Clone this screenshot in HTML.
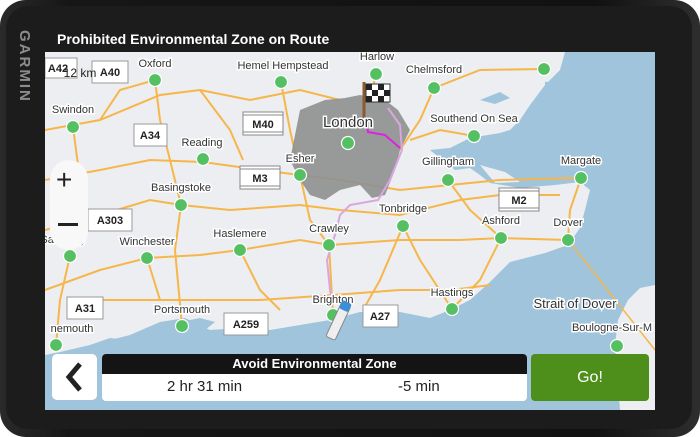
<!DOCTYPE html>
<html><head><meta charset="utf-8"><style>
*{margin:0;padding:0;box-sizing:border-box}
body{width:700px;height:437px;background:#fff;overflow:hidden;font-family:"Liberation Sans",sans-serif;position:relative}
.dev{position:absolute;left:0;top:0;width:700px;height:437px;border-radius:26px;background:linear-gradient(90deg,#2a2a2a,#161616 10%,#111 85%,#2e2e2e);}
.inner{position:absolute;left:6px;top:6px;right:8px;bottom:8px;border-radius:22px;background:#1c1c1c}
.title{position:absolute;left:57px;top:31px;color:#fff;font-weight:bold;font-size:14px}
.garmin{position:absolute;left:13px;top:30px;width:20px;color:#8c8c8c;font-weight:bold;font-size:15px;writing-mode:vertical-rl;letter-spacing:2px}
.map{position:absolute;left:45px;top:52px;width:610px;height:358px;overflow:hidden;background:#eceef1}
svg text{font-family:"Liberation Sans",sans-serif}
.btn{position:absolute;background:#fff;border-radius:5px}
</style></head><body>
<div class="dev"><div class="inner"></div></div>
<div class="garmin">GARMIN</div>
<div class="title">Prohibited Environmental Zone on Route</div>
<div class="map">
<svg width="610" height="358" viewBox="45 52 610 358" xmlns="http://www.w3.org/2000/svg">
<path fill="#9fc4dc" d="M525,52 L655,52 L655,285 L640,288 L628,300 L618,320 L615,345 L620,410 L45,410 L45,355 L60,352 L90,345 L130,335 L160,322 L185,318 L210,330 L240,328 L270,330 L300,325 L330,320 L360,312 L400,312 L430,318 L450,310 L470,300 L490,282 L510,262 L545,253 L568,245 L580,228 L585,210 L590,190 L580,182 L555,185 L520,188 L490,183 L480,175 L470,168 L455,170 L440,158 L430,150 L450,148 L470,138 L500,133 L510,130 L520,120 L530,105 L545,85 L545,72 Z"/>
<path fill="#eceef1" d="M520,52 L565,52 L560,70 L548,82 L530,80Z M480,165 L505,172 L520,182 L495,183Z"/>
<path fill="#9fc4dc" d="M180,322 L200,318 L215,322 L205,330Z M90,345 L110,338 L140,342 L120,352Z M480,100 L500,92 L510,98 L495,104Z"/>
<g fill="none" stroke="#f6b64a" stroke-width="2">
<path d="M45,130 L100,120 L160,95 L200,90 L250,100 L300,90 L340,100"/>
<path d="M45,180 L100,170 L150,160 L203,162 L260,170 L300,175 L340,180 L400,190 L450,185 L500,180 L580,178"/>
<path d="M45,230 L100,215 L150,200 L181,205 L230,210 L300,205 L340,210 L400,215 L460,200 L500,195 L560,195"/>
<path d="M45,290 L100,270 L147,258 L200,255 L240,250 L300,240 L330,245 L400,240 L460,240 L501,238 L568,240"/>
<path d="M155,80 L160,120 L170,160 L181,205 L175,250 L182,326"/>
<path d="M281,82 L290,130 L300,175 L310,220 L329,245 L333,315"/>
<path d="M73,127 L80,180 L70,256 L60,300 L56,345"/>
<path d="M403,226 L420,260 L452,309 M403,226 L380,280 L363,310 M501,238 L480,280 L452,309"/>
<path d="M434,88 L420,120 L400,150 M474,136 L440,130 L410,140 M376,74 L370,100"/>
<path d="M100,300 L182,300 L260,300 L333,295 L400,290 L452,290 L490,285"/>
<path d="M568,240 L655,350" stroke-width="1.5"/>
<path d="M240,250 L260,290 L280,310 M147,258 L160,300 M581,178 L570,210 L568,240 M448,180 L470,210 L501,238"/>
<path d="M200,90 L230,130 L243,160 M100,120 L120,90 L155,80 M434,88 L480,70 L544,69"/>
</g>
<path fill="#8f9090" opacity=".9" d="M300,110 L325,100 L345,98 L360,95 L385,100 L398,110 L410,130 L400,150 L395,170 L385,195 L372,198 L360,185 L340,190 L325,200 L310,195 L300,180 L290,160 L295,135Z"/>
<path fill="none" stroke="#d9a6de" stroke-width="2" d="M388,108 L400,125 L402,150 L390,180 L378,200 L350,205 L340,215 L335,235 L327,260 L330,290 L333,305"/>
<path fill="none" stroke="#e020e0" stroke-width="2" d="M366,118 L368,132 L385,135 L400,148"/>
<line x1="364" y1="82" x2="364" y2="118" stroke="#8a5a30" stroke-width="3"/>
<rect x="366" y="84" width="24" height="18" fill="#fff" stroke="#333"/>
<path fill="#222" d="M366,84h6v6h-6zM378,84h6v6h-6zM372,90h6v6h-6zM384,90h6v6h-6zM366,96h6v6h-6zM378,96h6v6h-6z"/>
<g fill="#55c062" stroke="#fff" stroke-width="1.2">
<circle cx="155" cy="80" r="6.5"/><circle cx="281" cy="82" r="6.5"/><circle cx="376" cy="74" r="6.5"/><circle cx="434" cy="88" r="6.5"/><circle cx="544" cy="69" r="6.5"/><circle cx="73" cy="127" r="6.5"/><circle cx="203" cy="159" r="6.5"/><circle cx="348" cy="143" r="6.5"/><circle cx="300" cy="175" r="6.5"/><circle cx="474" cy="136" r="6.5"/><circle cx="448" cy="180" r="6.5"/><circle cx="581" cy="178" r="6.5"/><circle cx="181" cy="205" r="6.5"/><circle cx="403" cy="226" r="6.5"/><circle cx="501" cy="238" r="6.5"/><circle cx="568" cy="240" r="6.5"/><circle cx="329" cy="245" r="6.5"/><circle cx="240" cy="250" r="6.5"/><circle cx="147" cy="258" r="6.5"/><circle cx="70" cy="256" r="6.5"/><circle cx="452" cy="309" r="6.5"/><circle cx="333" cy="315" r="6.5"/><circle cx="182" cy="326" r="6.5"/><circle cx="56" cy="345" r="6.5"/><circle cx="617" cy="346" r="6.5"/>
</g>
<g font-size="11" fill="#333" text-anchor="middle" stroke="#fff" stroke-width="3" paint-order="stroke">
<text x="155" y="67">Oxford</text><text x="283" y="69">Hemel Hempstead</text><text x="377" y="60">Harlow</text><text x="434" y="73">Chelmsford</text><text x="73" y="113">Swindon</text><text x="202" y="146">Reading</text><text x="300" y="162">Esher</text><text x="474" y="122">Southend On Sea</text><text x="448" y="165">Gillingham</text><text x="581" y="164">Margate</text><text x="181" y="191">Basingstoke</text><text x="403" y="212">Tonbridge</text><text x="501" y="224">Ashford</text><text x="568" y="226">Dover</text><text x="329" y="232">Crawley</text><text x="240" y="237">Haslemere</text><text x="147" y="245">Winchester</text><text x="63" y="243">Salisbury</text><text x="452" y="296">Hastings</text><text x="333" y="303">Brighton</text><text x="182" y="313">Portsmouth</text><text x="72" y="332">nemouth</text><text x="575" y="308" font-size="13">Strait of Dover</text><text x="612" y="331">Boulogne-Sur-M</text>
<text x="348" y="127" font-size="15">London</text>
</g>
<g font-size="11" font-weight="bold" fill="#222" text-anchor="middle">
<rect x="45" y="58" width="32" height="20" fill="#fff" stroke="#999"/><text x="58" y="72">A42</text>
<rect x="92" y="61" width="36" height="22" fill="#fff" stroke="#999"/><text x="110" y="76">A40</text>
<text x="80" y="77" font-weight="normal" font-size="12">12 km</text>
<rect x="134" y="124" width="33" height="22" fill="#fff" stroke="#999"/><text x="150" y="139">A34</text>
<rect x="88" y="209" width="44" height="22" fill="#fff" stroke="#999"/><text x="110" y="224">A303</text>
<rect x="67" y="297" width="36" height="22" fill="#fff" stroke="#999"/><text x="85" y="312">A31</text>
<rect x="224" y="313" width="44" height="22" fill="#fff" stroke="#999"/><text x="246" y="328">A259</text>
<rect x="363" y="305" width="35" height="22" fill="#fff" stroke="#999"/><text x="380" y="320">A27</text>
<rect x="243" y="112" width="40" height="23" fill="#fff" stroke="#888"/><line x1="243" y1="115" x2="283" y2="115" stroke="#888"/><line x1="243" y1="132" x2="283" y2="132" stroke="#888"/><text x="263" y="128">M40</text>
<rect x="240" y="166" width="40" height="23" fill="#fff" stroke="#888"/><line x1="240" y1="169" x2="280" y2="169" stroke="#888"/><line x1="240" y1="186" x2="280" y2="186" stroke="#888"/><text x="260" y="182">M3</text>
<rect x="499" y="188" width="40" height="23" fill="#fff" stroke="#888"/><line x1="499" y1="191" x2="539" y2="191" stroke="#888"/><line x1="499" y1="208" x2="539" y2="208" stroke="#888"/><text x="519" y="204">M2</text>
</g>
<g transform="rotate(25 338 322)"><rect x="333" y="302" width="10" height="38" rx="2" fill="#eee" stroke="#888"/><rect x="333" y="300" width="10" height="9" rx="2" fill="#3a8fd8"/></g>
</svg>
<div class="btn" style="left:5px;top:108px;width:38px;height:90px;border-radius:19px;background:#f8f8f8"></div>
<div style="position:absolute;left:11px;top:114px;font-size:28px;color:#222;line-height:1">+</div>
<div style="position:absolute;left:13px;top:171px;width:20px;height:3px;background:#222"></div>
</div>
<div class="btn" style="left:52px;top:354px;width:45px;height:46px"></div>
<svg style="position:absolute;left:52px;top:354px" width="45" height="46"><path d="M28,10 L17,23 L28,36" fill="none" stroke="#222" stroke-width="5"/></svg>
<div style="position:absolute;left:102px;top:354px;width:425px;height:47px;background:#fff;border-radius:4px;overflow:hidden">
<div style="height:20px;background:#141414;color:#fff;font-weight:bold;font-size:13px;text-align:center;line-height:20px">Avoid Environmental Zone</div>
<div style="position:absolute;left:65px;top:24px;font-size:15px;color:#222">2 hr 31 min</div>
<div style="position:absolute;left:296px;top:24px;font-size:15px;color:#222">-5 min</div>
</div>
<div style="position:absolute;left:531px;top:354px;width:118px;height:47px;background:#4d8f1a;border-radius:4px;color:#fff;font-size:16px;text-align:center;line-height:47px">Go!</div>
</body></html>
